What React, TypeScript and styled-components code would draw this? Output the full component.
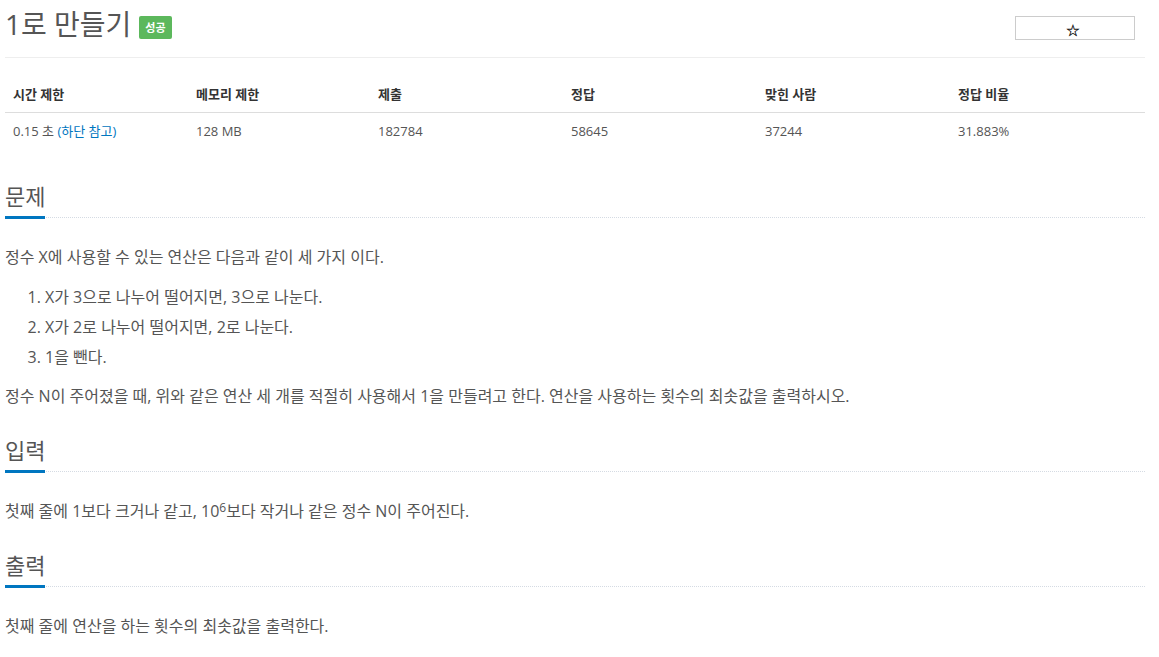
import styled, { createGlobalStyle } from 'styled-components';

const GlobalStyle = createGlobalStyle`
  body {
    margin: 0;
    background: #fff;
    color: #555;
    font-family: "Open Sans", "Noto Sans CJK KR", sans-serif;
  }
`;

const Page = styled.div`
  width: 1140px;
  margin-left: 5px;
`;

const PageHeader = styled.div`
  display: flex;
  align-items: flex-start;
  justify-content: space-between;
  padding: 8px 0 16px;
  border-bottom: 1px solid #eee;
`;

const Title = styled.h1`
  margin: 0;
  display: flex;
  align-items: center;
  gap: 8px;
  font-size: 28px;
  line-height: 33px;
  font-weight: 400;
  color: #555;
`;

const Badge = styled.span`
  display: inline-flex;
  align-items: center;
  height: 23px;
  padding: 0 6px;
  margin-top: 5px;
  background: #5cb85c;
  color: #fff;
  font-size: 11px;
  font-weight: 700;
  border-radius: 2px;
`;

const StarButton = styled.button`
  box-sizing: border-box;
  width: 120px;
  height: 24px;
  margin: 8px 10px 0 0;
  padding: 6px 4px 0 0;
  border: 1px solid #ccc;
  background: #fff;
  color: #111;
  font-family: "DejaVu Sans", sans-serif;
  font-size: 16px;
  line-height: 16px;
  -webkit-text-stroke: 0.3px #111;
`;

const InfoTable = styled.table`
  width: 100%;
  margin: 18px 0 35px;
  border-collapse: collapse;
  table-layout: fixed;
`;

const Th = styled.th<{ $w?: number }>`
  box-sizing: border-box;
  width: ${p => (p.$w ? `${p.$w}px` : 'auto')};
  padding: 8px;
  text-align: left;
  font-size: 13px;
  line-height: 20px;
  font-weight: 700;
  color: #333;
  border-bottom: 1px solid #ddd;
`;

const Td = styled.td`
  padding: 8px;
  font-size: 13px;
  line-height: 20px;
  color: #555;
`;

const Link = styled.a`
  color: #0076c0;
  text-decoration: none;
`;

const Section = styled.section<{ $first?: boolean }>`
  margin-top: ${p => (p.$first ? 0 : 30)}px;
`;

const Headline = styled.div`
  display: flex;
  margin-bottom: 27px;
  border-bottom: 1px dotted #d5dbe3;
`;

const HeadlineText = styled.h2`
  margin: 0 0 -2px;
  padding-bottom: 8px;
  border-bottom: 3px solid #0076c0;
  font-size: 22px;
  line-height: 24px;
  font-weight: 400;
  color: #555;
`;

const Para = styled.p`
  margin: 0 0 12px;
  font-size: 16px;
  line-height: 24px;
`;

const Sup = styled.sup`
  position: relative;
  top: -0.45em;
  vertical-align: baseline;
  font-size: 75%;
  line-height: 0;
`;

const List = styled.ol`
  margin: 13px 0 12px;
  padding-left: 40px;
  font-size: 16px;
  line-height: 30px;
`;

const columns = [
  { label: '시간 제한', w: 183 },
  { label: '메모리 제한', w: 182 },
  { label: '제출', w: 193 },
  { label: '정답', w: 194 },
  { label: '맞힌 사람', w: 193 },
  { label: '정답 비율' },
];

export default function App() {
  return (
    <Page>
      <GlobalStyle />
      <PageHeader>
        <Title>
          <span>1로 만들기</span>
          <Badge>성공</Badge>
        </Title>
        <StarButton>☆</StarButton>
      </PageHeader>

      <InfoTable>
        <thead>
          <tr>
            {columns.map(c => (
              <Th key={c.label} $w={c.w}>{c.label}</Th>
            ))}
          </tr>
        </thead>
        <tbody>
          <tr>
            <Td>
              0.15 초 <Link href="#">(하단 참고)</Link>
            </Td>
            <Td>128 MB</Td>
            <Td>182784</Td>
            <Td>58645</Td>
            <Td>37244</Td>
            <Td>31.883%</Td>
          </tr>
        </tbody>
      </InfoTable>

      <Section $first>
        <Headline>
          <HeadlineText>문제</HeadlineText>
        </Headline>
        <Para>정수 X에 사용할 수 있는 연산은 다음과 같이 세 가지 이다.</Para>
        <List>
          <li>X가 3으로 나누어 떨어지면, 3으로 나눈다.</li>
          <li>X가 2로 나누어 떨어지면, 2로 나눈다.</li>
          <li>1을 뺀다.</li>
        </List>
        <Para>
          정수 N이 주어졌을 때, 위와 같은 연산 세 개를 적절히 사용해서 1을 만들려고 한다. 연산을 사용하는 횟수의 최솟값을 출력하시오.
        </Para>
      </Section>

      <Section>
        <Headline>
          <HeadlineText>입력</HeadlineText>
        </Headline>
        <Para>
          첫째 줄에 1보다 크거나 같고, 10<Sup>6</Sup>보다 작거나 같은 정수 N이 주어진다.
        </Para>
      </Section>

      <Section>
        <Headline>
          <HeadlineText>출력</HeadlineText>
        </Headline>
        <Para>첫째 줄에 연산을 하는 횟수의 최솟값을 출력한다.</Para>
      </Section>
    </Page>
  );
}
